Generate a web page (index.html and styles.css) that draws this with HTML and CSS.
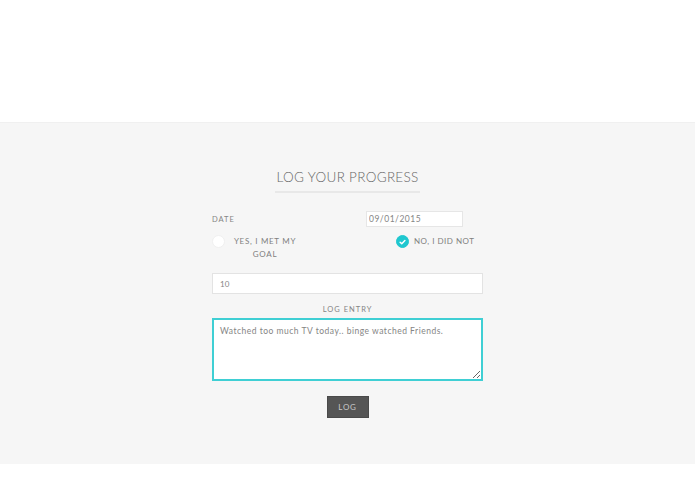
FILE: index.html
```html
<!DOCTYPE html>
<html>
<head>
<meta charset="utf-8">
<link rel="stylesheet" href="styles.css">
</head>
<body>
<div class="top"></div>
<section class="progress">
  <h2 class="title"><span>LOG YOUR PROGRESS</span></h2>
  <form class="form">
    <div class="row-date">
      <label class="label">DATE</label>
      <input class="date" type="text" value="09/01/2015">
    </div>
    <div class="row-radio">
      <div class="option option-yes">
        <span class="radio"></span>
        <span class="opt-text">YES, I MET MY<br>GOAL</span>
      </div>
      <div class="option option-no">
        <span class="radio checked">
          <svg viewBox="0 0 12 12" width="12" height="12"><path d="M3.4 6.2 L5.2 7.9 L8.6 4.4" fill="none" stroke="#fff" stroke-width="1.6" stroke-linecap="round" stroke-linejoin="round"/></svg>
        </span>
        <span class="opt-text">NO, I DID NOT</span>
      </div>
    </div>
    <input class="number" type="text" value="10">
    <div class="entry-label">LOG ENTRY</div>
    <textarea class="entry">Watched too much TV today.. binge watched Friends.</textarea>
    <div class="actions"><button class="btn" type="button">LOG</button></div>
  </form>
</section>
<div class="bottom"></div>
</body>
</html>
```
FILE: styles.css
```css
* { box-sizing: border-box; }
html, body { margin: 0; padding: 0; background: #fff; }
body { font-family: "Lato", "Open Sans", sans-serif; color: #777; }
.top { height: 122px; background: #fff; }
.progress {
  height: 342px;
  background: #f6f6f6;
  border-top: 1px solid #f0f0f0;
  padding-top: 45px;
}
.title {
  margin: 0;
  text-align: center;
  font-weight: 300;
  font-size: 13.5px;
  line-height: 19px;
  letter-spacing: 0.3px;
  color: #666;
}
.title span {
  display: inline-block;
  padding: 0 1px 4px;
  border-bottom: 2px solid #e8e8e8;
}
.form {
  width: 271px;
  margin: 18px auto 0;
  display: flex;
  flex-direction: column;
}
.row-date {
  display: flex;
  align-items: center;
  height: 16px;
}
.label {
  font-size: 7.5px;
  letter-spacing: 1px;
  color: #858585;
}
.date {
  margin-left: auto;
  margin-right: 20px;
  width: 97px;
  height: 16px;
  border: 1px solid #e6e6e6;
  background: #fff;
  font-family: inherit;
  font-size: 8.5px;
  letter-spacing: 0.5px;
  color: #858585;
  padding: 0 2px;
  outline: none;
}
.row-radio {
  display: flex;
  margin-top: 8px;
  justify-content: space-between;
}
.option {
  display: flex;
  align-items: flex-start;
}
.radio {
  width: 13px;
  height: 13px;
  border-radius: 50%;
  background: #fff;
  border: 1px solid #f0f0f0;
  display: flex;
  align-items: center;
  justify-content: center;
  flex: none;
}
.radio.checked { background: #1fc7cf; border-color: #1fc7cf; }
.radio svg { display: block; }
.opt-text {
  font-size: 8px;
  line-height: 13px;
  letter-spacing: 0.7px;
  color: #808080;
}
.option-yes .opt-text { width: 74px; margin-left: 3px; text-align: center; }
.option-no { width: 87px; }
.option-no .opt-text { margin-left: 5px; letter-spacing: 0.5px; }
.number {
  margin-top: 12px;
  width: 271px;
  height: 21px;
  border: 1px solid #e3e3e3;
  background: #fff;
  font-family: inherit;
  font-size: 8px;
  color: #858585;
  padding: 0 7px;
  outline: none;
}
.entry-label {
  margin-top: 11px;
  text-align: center;
  font-size: 7.5px;
  line-height: 10px;
  letter-spacing: 1px;
  color: #858585;
}
.entry {
  margin-top: 3px;
  width: 271px;
  height: 63px;
  border: 2px solid #3fcfd4;
  background: #fff;
  font-family: inherit;
  font-size: 8.5px;
  letter-spacing: 0.5px;
  color: #858585;
  padding: 6px 6px;
  outline: none;
  resize: vertical;
}
.actions {
  display: flex;
  justify-content: center;
  margin-top: 15px;
}
.btn {
  width: 42px;
  height: 22px;
  background: #555;
  border: 1px solid #4a4a4a;
  color: #c8c8c8;
  font-family: inherit;
  font-size: 8px;
  letter-spacing: 0.8px;
  padding: 0;
}
.bottom { height: 30px; background: #fff; }
```
